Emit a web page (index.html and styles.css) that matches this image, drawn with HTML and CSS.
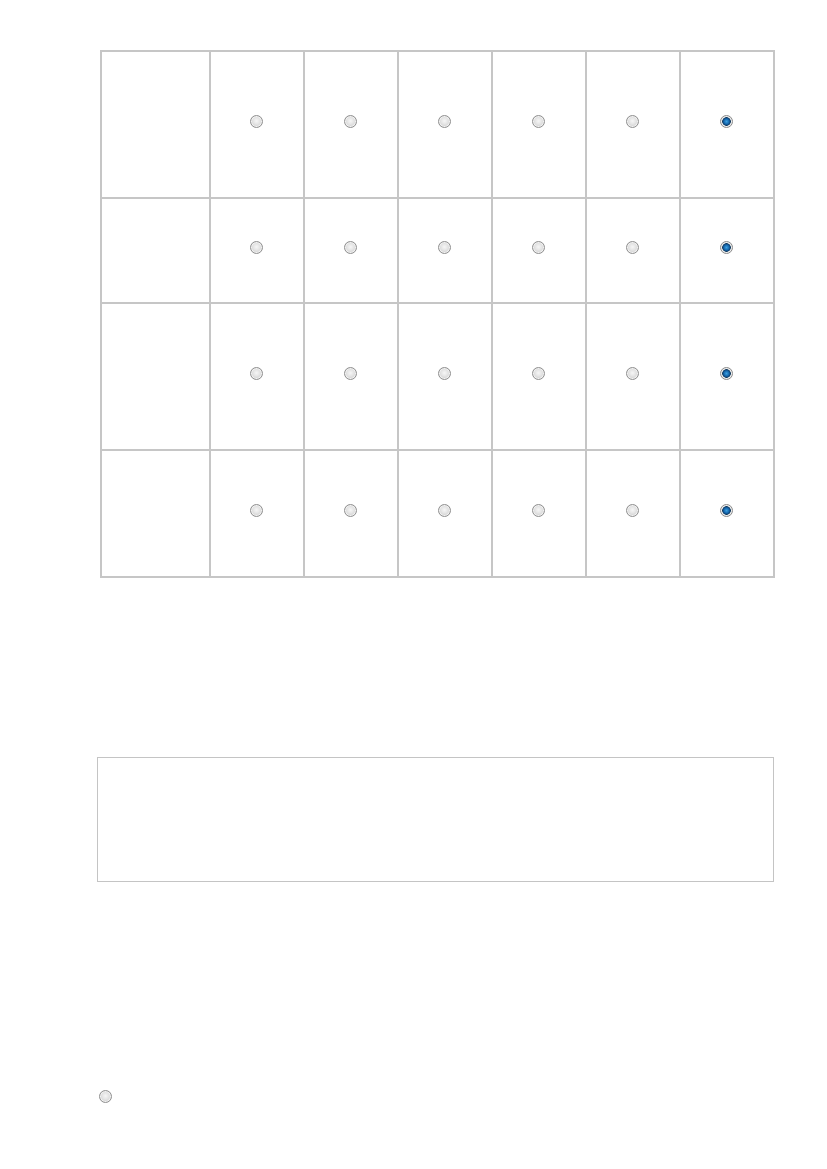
FILE: index.html
```html
<!DOCTYPE html>
<html>
<head>
<meta charset="utf-8">
<link rel="stylesheet" href="styles.css">
</head>
<body>
<table class="grid">
  <tr class="r1">
    <td class="label"></td>
    <td><input type="radio" class="rb" name="a"></td>
    <td><input type="radio" class="rb" name="a"></td>
    <td><input type="radio" class="rb" name="a"></td>
    <td><input type="radio" class="rb" name="a"></td>
    <td><input type="radio" class="rb" name="a"></td>
    <td><input type="radio" class="rb" name="a" checked></td>
  </tr>
  <tr class="r2">
    <td class="label"></td>
    <td><input type="radio" class="rb" name="b"></td>
    <td><input type="radio" class="rb" name="b"></td>
    <td><input type="radio" class="rb" name="b"></td>
    <td><input type="radio" class="rb" name="b"></td>
    <td><input type="radio" class="rb" name="b"></td>
    <td><input type="radio" class="rb" name="b" checked></td>
  </tr>
  <tr class="r3">
    <td class="label"></td>
    <td><input type="radio" class="rb" name="c"></td>
    <td><input type="radio" class="rb" name="c"></td>
    <td><input type="radio" class="rb" name="c"></td>
    <td><input type="radio" class="rb" name="c"></td>
    <td><input type="radio" class="rb" name="c"></td>
    <td><input type="radio" class="rb" name="c" checked></td>
  </tr>
  <tr class="r4">
    <td class="label"></td>
    <td><input type="radio" class="rb" name="d"></td>
    <td><input type="radio" class="rb" name="d"></td>
    <td><input type="radio" class="rb" name="d"></td>
    <td><input type="radio" class="rb" name="d"></td>
    <td><input type="radio" class="rb" name="d"></td>
    <td><input type="radio" class="rb" name="d" checked></td>
  </tr>
</table>
<div class="textbox"></div>
<div class="single"><input type="radio" class="rb" name="e"></div>
</body>
</html>
```
FILE: styles.css
```css
html, body {
  margin: 0;
  padding: 0;
  background: #ffffff;
  font-family: "Liberation Sans", Arial, sans-serif;
}
body {
  padding-top: 50px;
}
.grid {
  margin-left: 100px;
  border-collapse: separate;
  border-spacing: 0;
  border: 1px solid #c6c6c6;
  table-layout: fixed;
  width: 675px;
}
.grid td {
  border: 1px solid #c6c6c6;
  padding: 0 1px 7px 0;
  width: 91px;
  text-align: center;
  vertical-align: middle;
}
.grid td.label {
  width: 106px;
}
.r1 td { height: 138px; }
.r2 td { height: 96px; }
.r3 td { height: 138px; }
.r4 td { height: 118px; }
.rb {
  appearance: none;
  -webkit-appearance: none;
  display: block;
  margin: 0 auto;
  width: 13px;
  height: 13px;
  box-sizing: border-box;
  border-radius: 50%;
  border: 1px solid #8f8f8f;
  background: radial-gradient(circle closest-side at 50% 45%, #f6f6f6 0px, #e6e6e6 3px, #d4d4d4 5.5px);
  box-shadow: inset 0 0 0 1px #f2f2f2;
}
.rb:checked {
  border-color: #8a8a8a;
  background: radial-gradient(circle closest-side at 50% 50%, #3aa0e0 0px, #1a6fb5 2.2px, #0f4f8a 3.4px, #123a5e 4px, #f4f4f4 4.6px, #e8e8e8 5.5px);
  box-shadow: none;
}
.textbox {
  margin-top: 179px;
  margin-left: 97px;
  width: 677px;
  height: 125px;
  box-sizing: border-box;
  border: 1px solid #c4c4c4;
}
.single {
  margin-top: 208px;
  margin-left: 99px;
  width: 13px;
}
.single .rb {
  margin: 0;
}
```
